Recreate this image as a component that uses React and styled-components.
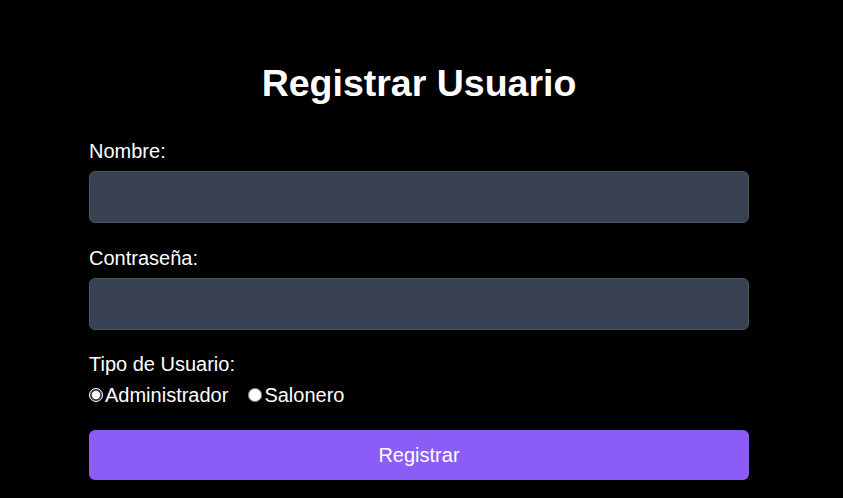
import React from "react";
import styled, { createGlobalStyle } from "styled-components";

const GlobalStyle = createGlobalStyle`
  html, body {
    margin: 0;
    padding: 0;
    background: #000000;
  }
  body {
    font-family: "Liberation Sans", Arial, sans-serif;
    color: #ffffff;
  }
`;

const Page = styled.div`
  min-height: 498px;
  box-sizing: border-box;
  padding: 62px 94px 0 89px;
  background: #000000;
`;

const Form = styled.form`
  display: flex;
  flex-direction: column;
  width: 100%;
`;

const Title = styled.h1`
  margin: 0 0 35px;
  font-size: 37.5px;
  line-height: 43px;
  font-weight: 700;
  text-align: center;
  color: #ffffff;
`;

const Field = styled.div`
  display: flex;
  flex-direction: column;
  gap: ${(p) => p.$gap || 8}px;
  margin-bottom: ${(p) => p.$mb || 24}px;
`;

const Label = styled.label`
  font-size: 20px;
  line-height: 23px;
  color: #ffffff;
`;

const Input = styled.input`
  box-sizing: border-box;
  width: 100%;
  height: 52px;
  padding: 0 12px;
  border: 1px solid #4b5563;
  border-radius: 6px;
  background: #374151;
  color: #ffffff;
  font-family: inherit;
  font-size: 20px;
  outline: none;
`;

const RadioRow = styled.div`
  display: flex;
  align-items: center;
  gap: 20px;
  height: 24px;
`;

const RadioLabel = styled.label`
  display: flex;
  align-items: center;
  font-size: 20px;
  line-height: 24px;
  color: #ffffff;
`;

const Radio = styled.input`
  width: 14px;
  height: 14px;
  margin: 0 2px 0 0;
  accent-color: #ffffff;
`;

const Button = styled.button`
  height: 50px;
  width: 100%;
  border: none;
  border-radius: 6px;
  background: #8b5cf6;
  color: #ffffff;
  font-family: inherit;
  font-size: 20px;
  cursor: pointer;
`;

export default function App() {
  return (
    <>
      <GlobalStyle />
      <Page>
        <Form onSubmit={(e) => e.preventDefault()}>
          <Title>Registrar Usuario</Title>
          <Field>
            <Label htmlFor="nombre">Nombre:</Label>
            <Input id="nombre" type="text" />
          </Field>
          <Field $mb={23}>
            <Label htmlFor="pass">Contraseña:</Label>
            <Input id="pass" type="password" />
          </Field>
          <Field $gap={7} $mb={23}>
            <Label as="span">Tipo de Usuario:</Label>
            <RadioRow>
              <RadioLabel>
                <Radio type="radio" name="tipo" defaultChecked />
                Administrador
              </RadioLabel>
              <RadioLabel>
                <Radio type="radio" name="tipo" />
                Salonero
              </RadioLabel>
            </RadioRow>
          </Field>
          <Button type="submit">Registrar</Button>
        </Form>
      </Page>
    </>
  );
}
